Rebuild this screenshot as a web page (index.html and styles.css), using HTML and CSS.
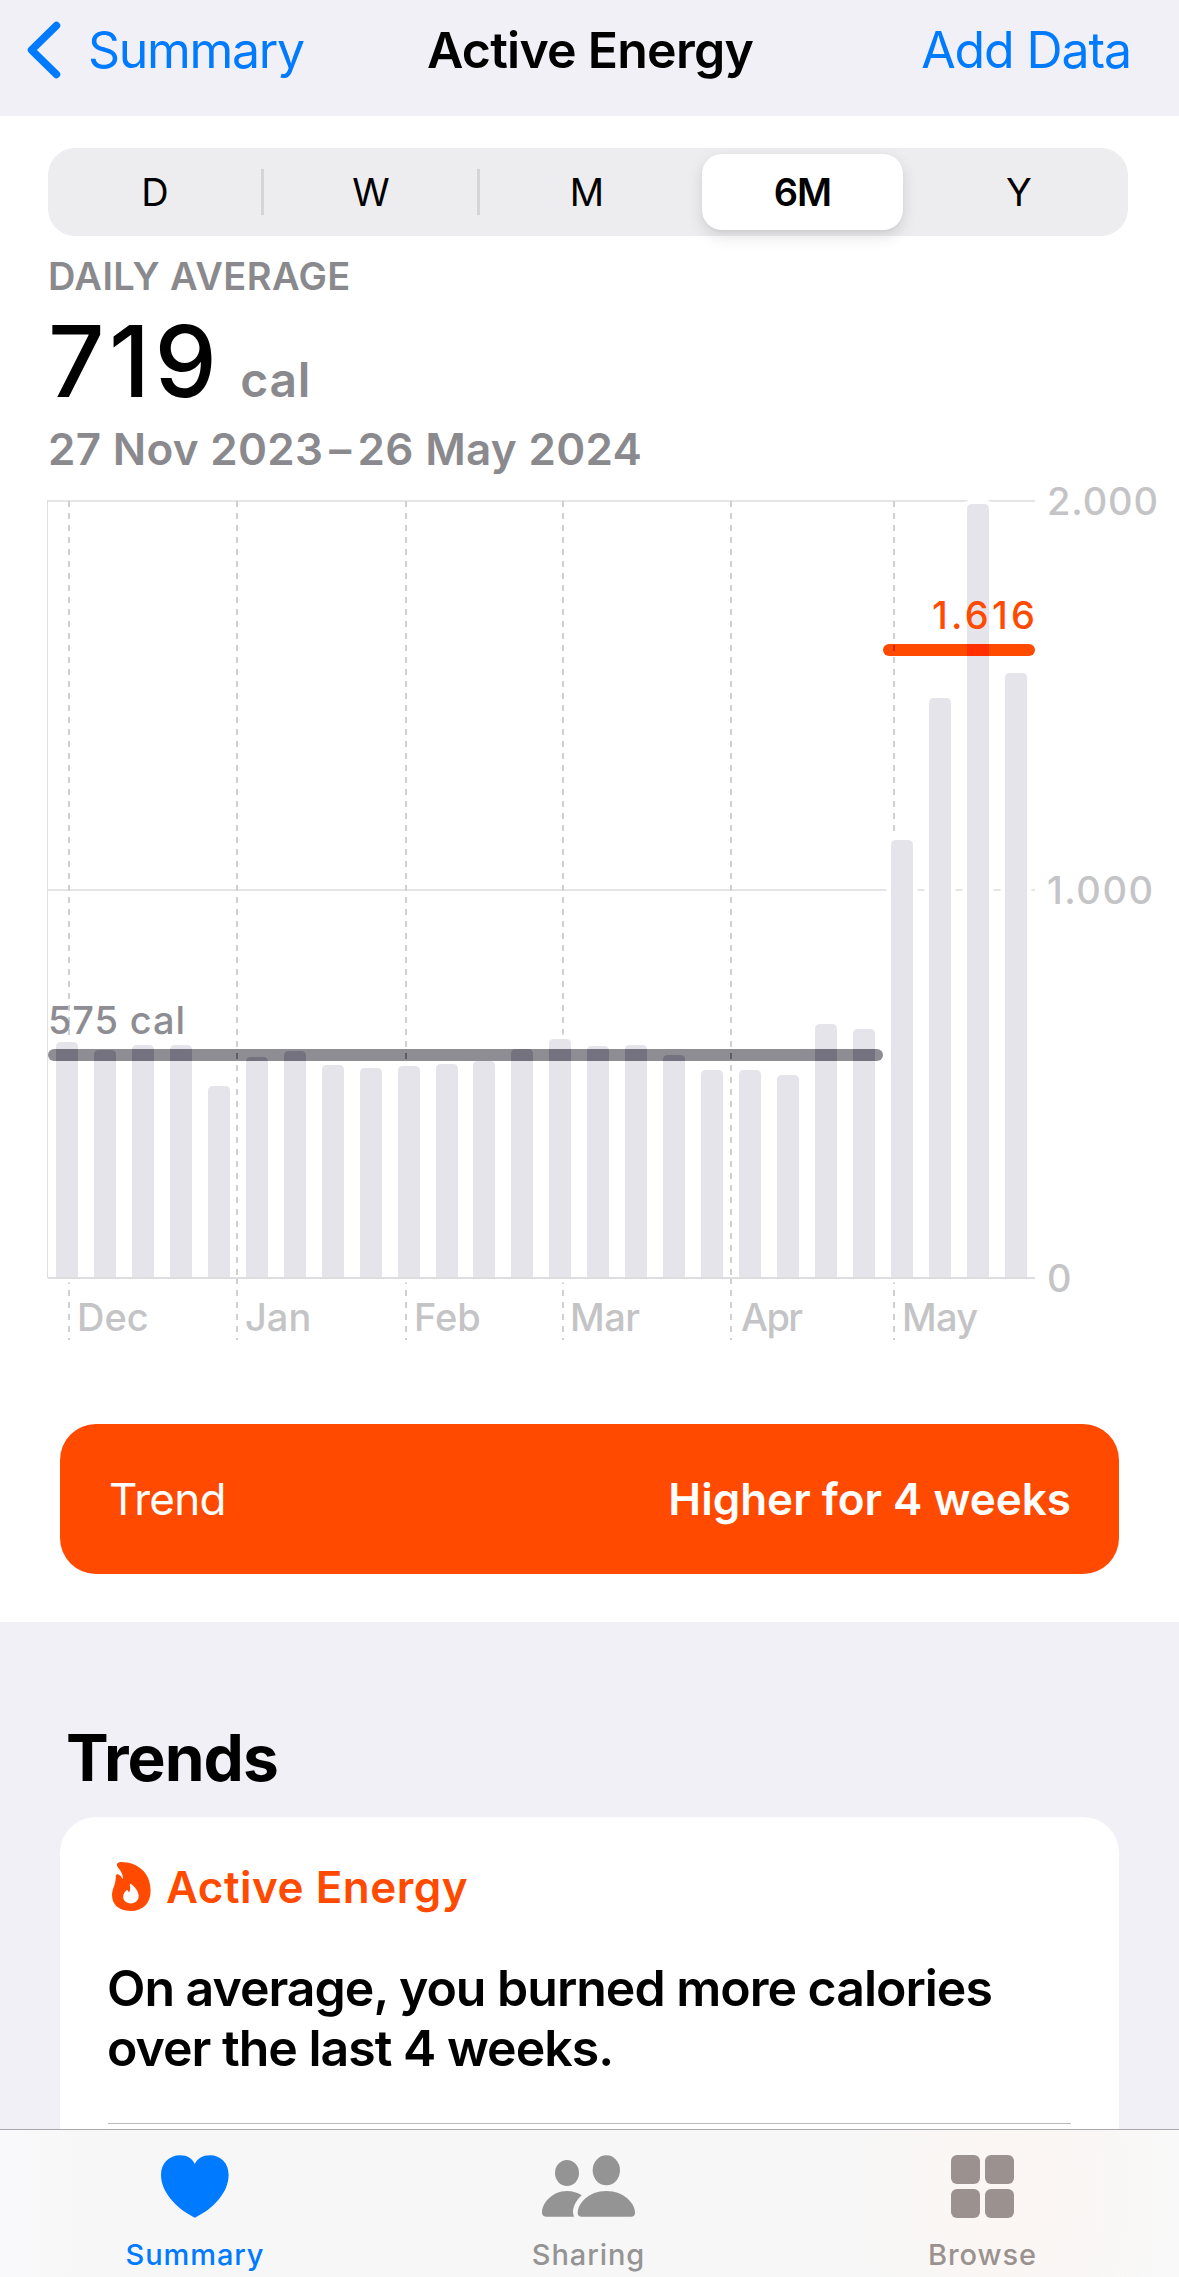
FILE: index.html
```
<!DOCTYPE html>
<html lang="en">
<head>
    <meta charset="UTF-8">
    <meta name="viewport" content="width=device-width, initial-scale=1.0">
    <title>Active Energy</title>
    <link rel="stylesheet" href="styles.css">
</head>
<body>
    <header class="navbar">
        <a class="back">
            <svg class="chevron" width="34" height="58" viewBox="0 0 34 58">
                <path d="M29.500 4.500L4.500 29L29.500 53.500" fill="none" stroke="currentColor" stroke-width="7.500" stroke-linecap="round" stroke-linejoin="round"/>
            </svg>
            <span>Summary</span>
        </a>
        <h1>Active Energy</h1>
        <a class="add">Add Data</a>
    </header>

    <main>
        <section class="overview">
            <div class="segments">
                <div class="segment">D</div>
                <i class="divider"></i>
                <div class="segment">W</div>
                <i class="divider"></i>
                <div class="segment">M</div>
                <div class="segment active">6M</div>
                <div class="segment">Y</div>
            </div>

            <div class="stats">
                <div class="label">DAILY AVERAGE</div>
                <div class="value"><strong>719</strong><span>cal</span></div>
                <div class="range">27 Nov 2023<span class="dash">–</span>26 May 2024</div>
            </div>

            <svg class="chart" width="1179" height="902" viewBox="0 474 1179 902">
                <g class="grid">
                    <path d="M48 501H1035M48 890H1035"/>
                    <path class="edge" d="M47.500 500V1278"/>
                </g>
                <g class="months">
                    <path d="M69 501V1277M237 501V1277M406 501V1277M563 501V1277M731 501V1277M894 501V1277"/>
                    <path d="M69 1278V1340M237 1278V1340M406 1278V1340M563 1278V1340M731 1278V1340M894 1278V1340"/>
                </g>
                <path class="halo" data-bars/>
                <path class="bars" data-bars/>
                <path class="baseline" d="M48 1278H1035"/>

                <clipPath id="barClip"><path data-bars/></clipPath>
                <rect class="avg" x="48" y="1049" width="835" height="12" rx="6"/>
                <rect class="avg-over" x="48" y="1049" width="835" height="12" rx="6" clip-path="url(#barClip)"/>
                <path class="avg-tick" d="M237 1053V1059M406 1053V1059M731 1053V1059"/>
                <rect class="trend" x="883" y="644" width="152" height="12" rx="6"/>
                <rect class="trend-over" x="883" y="644" width="152" height="12" rx="6" clip-path="url(#barClip)"/>
                <path class="trend-tick" d="M894 645V651"/>

                <g class="axis">
                    <text x="1047" y="515" textLength="111">2.000</text>
                    <text x="1047" y="904" textLength="106">1.000</text>
                    <text x="1047" y="1292">0</text>
                    <text x="77" y="1331">Dec</text>
                    <text x="245" y="1331">Jan</text>
                    <text x="414" y="1331">Feb</text>
                    <text x="570" y="1331" textLength="70">Mar</text>
                    <text x="741" y="1331" textLength="62">Apr</text>
                    <text x="902" y="1331" textLength="76">May</text>
                </g>
                <text class="avg-text" x="48" y="1034" textLength="137">575 cal</text>
                <text class="trend-text" x="932" y="629" textLength="103">1.616</text>
            </svg>

            <div class="trend-card">
                <span>Trend</span>
                <strong>Higher for 4 weeks</strong>
            </div>
        </section>

        <section class="trends">
            <h2>Trends</h2>
            <div class="card">
                <div class="card-title">
                    <svg width="39" height="49" viewBox="293 122 101 148" preserveAspectRatio="none">
                        <path fill="currentColor" fill-rule="evenodd" d="M316 122C360 122 393 155 393 208C393 246 374 270 341 270C310 270 293 250 293 222C293 203 303 190 303 165C303 159 308 158 312 161C316 164 318 168 321 174C323 163 316 148 309 139C303 131 306 122 316 122ZM341 188C352 196 362 211 362 225C362 239 353 247 342 247C330 247 322 239 322 228C322 218 327 210 331 207C334 205 335 211 337 214C341 208 341 200 339 191Q339 187 341 188Z"/>
                    </svg>
                    <span>Active Energy</span>
                </div>
                <p>On average, you burned more calories<br>over the last 4 weeks.</p>
                <hr>
            </div>
        </section>
    </main>

    <nav class="tabbar">
        <a class="tab selected">
            <svg width="68" height="63" viewBox="421 1005 177 189" preserveAspectRatio="none">
                <path fill="currentColor" d="M509 1193C460 1165 421 1115 421 1065C421 1030 442 1006 471 1006C489 1006 502 1016 509 1032C516 1016 530 1006 548 1006C577 1006 597 1030 597 1065C597 1115 560 1165 509 1193Z"/>
            </svg>
            <span>Summary</span>
        </a>
        <a class="tab sharing">
            <svg width="93" height="63" viewBox="36 44 279 189">
                <g fill="currentColor">
                    <ellipse cx="111" cy="98" rx="36" ry="39"/>
                    <ellipse cx="229" cy="90" rx="41" ry="45"/>
                    <path d="M36 216C36 190 65 152 111 152C128 152 144 157 155 165C138 180 129 200 129 215Q129 223 132 229H48Q36 229 36 216Z"/>
                    <path d="M143 218C143 190 175 152 229 152C283 152 315 190 315 218Q315 229 303 229H155Q143 229 143 218Z"/>
                </g>
            </svg>
            <span>Sharing</span>
        </a>
        <a class="tab browse">
            <svg width="63" height="63" viewBox="0 0 63 63">
                <g fill="currentColor">
                    <rect width="29" height="29" rx="6"/>
                    <rect x="34" width="29" height="29" rx="6"/>
                    <rect y="34" width="29" height="29" rx="6"/>
                    <rect x="34" y="34" width="29" height="29" rx="6"/>
                </g>
            </svg>
            <span>Browse</span>
        </a>
    </nav>

    <script>
        // top edge of every weekly bar
        const tops = [1042, 1050, 1045, 1045, 1086, 1057, 1051, 1065, 1068, 1066, 1064, 1061, 1049,
                      1039, 1046, 1045, 1055, 1070, 1070, 1075, 1024, 1029, 840, 698, 504, 673];

        const d = tops.map((top, i) => {
            const x = Math.round(55.9 + i * 37.96);
            return `M${x} 1278V${top + 5}q0-5 5-5h12q5 0 5 5V1278z`;
        }).join('');

        document.querySelectorAll('[data-bars]').forEach(path => path.setAttribute('d', d));
    </script>
</body>
</html>
```
FILE: styles.css
```
* {
    box-sizing: border-box;
}

body {
    margin: 0;
    width: 1179px;
    height: 2277px;
    display: flex;
    flex-direction: column;
    overflow: hidden;
    font-family: Inter, "Liberation Sans", sans-serif;
    color: #000;
    background: #f1f0f6;
}

h1, h2, p {
    margin: 0;
}

.navbar {
    display: grid;
    grid-template-columns: 1fr auto 1fr;
    align-items: center;
    height: 116px;
    padding: 0 48px 16px 27px;
    font-size: 50px;
    line-height: 60px;
    color: #007aff;
}

.navbar h1 {
    padding-left: 22px;
    font-size: 50px;
    font-weight: 600;
    letter-spacing: -0.75px;
    color: #000;
}

.back {
    display: flex;
    align-items: center;
    gap: 27px;
    letter-spacing: -1.3px;
}

.add {
    text-align: right;
    letter-spacing: -1.1px;
}

main {
    flex: 1;
    min-height: 0;
    overflow: hidden;
}

.overview {
    padding: 32px 0 48px;
    background: #fff;
}

.segments {
    display: flex;
    align-items: center;
    height: 88px;
    margin: 0 51px 0 48px;
    border-radius: 27px;
    background: #ededef;
    font-size: 38px;
}

.segment {
    width: 216px;
    padding-right: 2px;
    text-align: center;
    line-height: 76px;
}

.segment.active {
    width: 201px;
    margin: 0 9px 0 6px;
    padding: 0;
    border-radius: 20px;
    background: #fff;
    font-weight: 600;
    letter-spacing: -1px;
    box-shadow: 0 6px 16px rgba(0, 0, 0, 0.12), 0 2px 3px rgba(0, 0, 0, 0.04);
}

.divider {
    width: 3px;
    height: 46px;
    margin-left: -3px;
    background: #d5d5d8;
}

.stats {
    padding: 17px 0 0 48px;
    color: #8a8a8e;
    font-weight: 600;
}

.label {
    font-size: 38px;
    line-height: 46px;
    letter-spacing: 0.4px;
}

.value {
    display: flex;
    align-items: baseline;
    gap: 19px;
    height: 120px;
    margin-top: 2px;
    line-height: 120px;
}

.value strong {
    font-size: 99px;
    font-weight: 500;
    letter-spacing: 4.4px;
    color: #000;
}

.value span {
    font-size: 48px;
    letter-spacing: 0.8px;
}

.range {
    margin-top: 3px;
    font-size: 44px;
    line-height: 50px;
    letter-spacing: 0.3px;
}

.dash {
    margin: 0 6px;
}

.chart {
    display: block;
}

.chart text {
    font-size: 38px;
    font-weight: 500;
}

.grid path {
    stroke: #e5e5e7;
    stroke-width: 2;
}

.grid .edge {
    stroke: #dededf;
    stroke-width: 1;
}

.months path {
    stroke: #d0d0d3;
    stroke-width: 2;
    stroke-dasharray: 6 6;
}

.halo {
    fill: #fff;
    stroke: #fff;
    stroke-width: 9;
}

.bars {
    fill: #e5e4ea;
}

.baseline {
    stroke: #dddde0;
    stroke-width: 2;
}

.avg {
    fill: #8e8d93;
}

.avg-over {
    fill: #73727e;
}

.avg-tick {
    stroke: #5e5d63;
    stroke-width: 2;
}

.trend {
    fill: #ff4a00;
}

.trend-over {
    fill: #ff2f00;
}

.trend-tick {
    stroke: #d52400;
    stroke-width: 2;
}

.axis {
    fill: #c4c4c6;
}

.chart .avg-text {
    fill: #8e8d93;
}

.chart .trend-text {
    fill: #ff4a00;
}

.trend-card {
    display: flex;
    align-items: center;
    justify-content: space-between;
    height: 150px;
    margin: 48px 60px 0;
    padding: 0 48px 0 49px;
    border-radius: 36px;
    background: #ff4a00;
    color: #fff;
    font-size: 44px;
    letter-spacing: -0.7px;
}

.trend-card strong {
    font-weight: 600;
    letter-spacing: 0;
}

.trends {
    padding: 96px 60px 0;
}

.trends h2 {
    margin: 0 0 19px 6px;
    font-size: 64px;
    line-height: 80px;
    letter-spacing: -1px;
}

.card {
    height: 500px;
    padding: 43px 48px 0 47px;
    border-radius: 36px;
    background: #fff;
}

.card-title {
    display: flex;
    align-items: center;
    gap: 15px;
    height: 54px;
    padding-left: 5px;
    color: #ff4a00;
    font-size: 44px;
    font-weight: 600;
    letter-spacing: 0.5px;
}

.card-title svg {
    margin-bottom: 2px;
}

.card p {
    margin: 44px 0 45px;
    font-size: 50px;
    font-weight: 600;
    line-height: 60px;
    letter-spacing: -1px;
    white-space: nowrap;
}

.card hr {
    height: 1px;
    margin: 0 0 0 1px;
    border: 0;
    background: #bcbcbf;
}

.tabbar {
    display: flex;
    height: 148px;
    border-top: 1px solid #a9a9ab;
    background:
        radial-gradient(ellipse 170px 190px at 1010px 60px, #fcf6f3, rgba(252, 246, 243, 0)),
        linear-gradient(90deg, #f9f9fb, #f7f7f7 110px, #f7f7f7 1050px, #f9f9f9);
    color: #949494;
}

.tab {
    flex: 0 0 393px;
    display: flex;
    flex-direction: column;
    align-items: center;
    gap: 19px;
    padding-top: 25px;
    font-size: 29px;
    font-weight: 500;
    line-height: 36px;
    letter-spacing: 0.9px;
}

.tab.selected {
    padding-right: 3px;
    color: #007aff;
}

.tab.sharing {
    padding-right: 2px;
}

.tab.browse {
    color: #9b928f;
}
```
